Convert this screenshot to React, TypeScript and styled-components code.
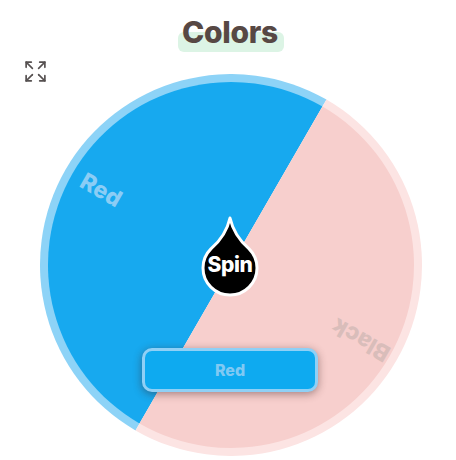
import styled, { createGlobalStyle } from 'styled-components';
import { Expand } from 'lucide-react';

const GlobalStyle = createGlobalStyle`
  body {
    margin: 0;
    background: #ffffff;
    font-family: Inter, "Noto Sans", sans-serif;
  }
`;

const Page = styled.div`
  width: 456px;
  height: 460px;
  display: flex;
  flex-direction: column;
  align-items: center;
  overflow: hidden;
`;

const Title = styled.h1`
  position: relative;
  margin: 12px 0 0 4px;
  font-size: 30px;
  line-height: 40px;
  font-weight: 800;
  color: #574844;
  letter-spacing: -0.3px;

  &::before {
    content: '';
    position: absolute;
    left: -4px;
    right: -6px;
    bottom: 0;
    height: 20px;
    border-radius: 6px;
    background: #dcf4e5;
    z-index: -1;
  }
`;

const Label = styled.span`
  position: relative;
  z-index: 1;
`;

const Stage = styled.div`
  position: relative;
  width: 456px;
  display: flex;
  padding: 22px 0 0 40px;
  box-sizing: border-box;
`;

const ExpandButton = styled.button`
  position: absolute;
  top: 7px;
  left: 23px;
  padding: 0;
  border: none;
  background: none;
  color: #555050;
  display: flex;
  cursor: pointer;
`;

const Wheel = styled.div`
  position: relative;
  width: 382px;
  height: 382px;
`;

const SpinButton = styled.button`
  position: absolute;
  left: 155px;
  top: 138px;
  width: 70px;
  height: 90px;
  padding: 0;
  border: none;
  background: none;
  cursor: pointer;

  svg {
    position: absolute;
    inset: 0;
  }
`;

const SpinText = styled.span`
  position: absolute;
  left: 0;
  right: 0;
  top: 40px;
  text-align: center;
  color: #ffffff;
  font-family: Inter, "Noto Sans", sans-serif;
  font-weight: 800;
  font-size: 21px;
  letter-spacing: -0.4px;
`;

const Result = styled.div`
  position: absolute;
  left: 102px;
  top: 274px;
  width: 176px;
  height: 44px;
  box-sizing: border-box;
  border: 3px solid #8fd0f6;
  border-radius: 10px;
  background: #0eaaf0;
  box-shadow: 0 2px 8px rgba(60, 30, 30, 0.45);
  display: flex;
  align-items: center;
  justify-content: center;
  color: #80c9f3;
  font-weight: 800;
  font-size: 16px;
`;

const segments = [
  { label: 'Red', color: '#17a9ef', ring: '#8dd3f7', text: '#8bcdf5', from: 210, to: 390 },
  { label: 'Black', color: '#f7cfcd', ring: '#fce4e3', text: '#d9bdba', from: 30, to: 210 },
];

const C = 191;

const pt = (r: number, deg: number) => {
  const a = (deg * Math.PI) / 180;
  return `${C + r * Math.sin(a)} ${C - r * Math.cos(a)}`;
};

const slice = (r: number, from: number, to: number) =>
  `M ${C} ${C} L ${pt(r, from)} A ${r} ${r} 0 0 1 ${pt(r, to)} Z`;

export default function App() {
  return (
    <Page>
      <GlobalStyle />
      <Title>
        <Label>Colors</Label>
      </Title>
      <Stage>
        <ExpandButton aria-label="Fullscreen">
          <Expand size={25} strokeWidth={1.6} />
        </ExpandButton>
        <Wheel>
          <svg width="382" height="382" viewBox="0 0 382 382">
            {segments.map((s) => {
              const mid = (s.from + s.to) / 2;
              const [x, y] = pt(150, mid).split(' ').map(Number);
              return (
                <g key={s.label}>
                  <path d={slice(191, s.from, s.to)} fill={s.ring} />
                  <path d={slice(183, s.from, s.to)} fill={s.color} />
                  <text
                    x={x}
                    y={y}
                    transform={`rotate(${mid - 270} ${x} ${y})`}
                    textAnchor="middle"
                    dominantBaseline="central"
                    fill={s.text}
                    fontFamily="Inter, 'Noto Sans', sans-serif"
                    fontWeight={800}
                    fontSize={23}
                  >
                    {s.label}
                  </text>
                </g>
              );
            })}
          </svg>
          <SpinButton>
            <svg width="70" height="90" viewBox="0 0 70 90">
              <path
                d="M 35 6 Q 39 24 54.1 36.9 A 27 27 0 1 1 15.9 36.9 Q 31 24 35 6 Z"
                fill="#000"
                stroke="#fff"
                strokeWidth={3}
                strokeLinejoin="round"
              />
            </svg>
            <SpinText>Spin</SpinText>
          </SpinButton>
          <Result>Red</Result>
        </Wheel>
      </Stage>
    </Page>
  );
}
